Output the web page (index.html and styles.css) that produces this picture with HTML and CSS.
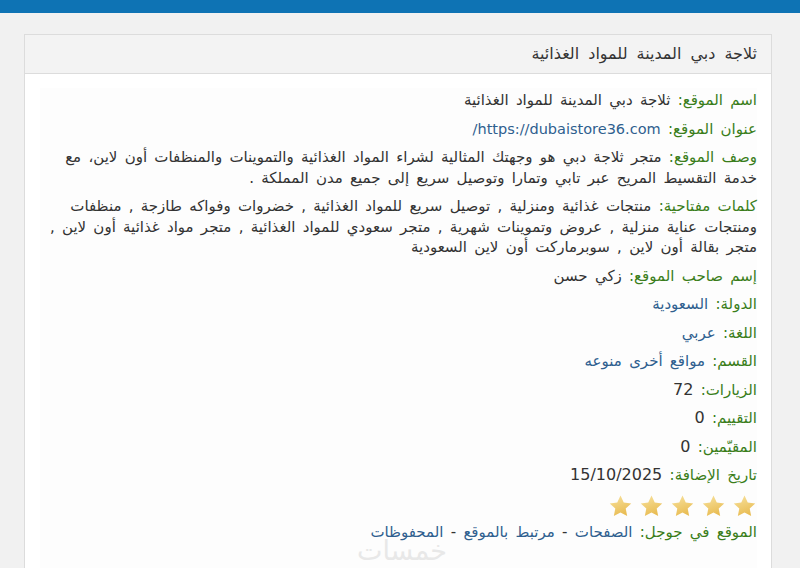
FILE: index.html
```html
<!DOCTYPE html>
<html lang="ar" dir="rtl">
<head>
    <meta charset="UTF-8">
    <title>ثلاجة دبي المدينة للمواد الغذائية</title>
    <link rel="stylesheet" href="styles.css">
</head>
<body>
    <svg class="defs" width="0" height="0">
        <linearGradient id="gold" x1="0" y1="0" x2="0.4" y2="1">
            <stop offset="0" stop-color="#f8e3a0"/>
            <stop offset="1" stop-color="#e9bd55"/>
        </linearGradient>
    </svg>

    <div class="topbar"></div>

    <div class="panel">
        <div class="panel-head">ثلاجة دبي المدينة للمواد الغذائية</div>
        <div class="panel-body">
            <div class="info">
                <p><span class="lbl">اسم الموقع:</span> ثلاجة دبي المدينة للمواد الغذائية</p>
                <p><span class="lbl">عنوان الموقع:</span> <a href="#" class="url">https://dubaistore36.com/</a></p>
                <p><span class="lbl">وصف الموقع:</span> متجر ثلاجة دبي هو وجهتك المثالية لشراء المواد الغذائية والتموينات والمنظفات أون لاين، مع خدمة التقسيط المريح عبر تابي وتمارا وتوصيل سريع إلى جميع مدن المملكة .</p>
                <p><span class="lbl">كلمات مفتاحية:</span> منتجات غذائية ومنزلية , توصيل سريع للمواد الغذائية , خضروات وفواكه طازجة , منظفات ومنتجات عناية منزلية , عروض وتموينات شهرية , متجر سعودي للمواد الغذائية , متجر مواد غذائية أون لاين , متجر بقالة أون لاين , سوبرماركت أون لاين السعودية</p>
                <p><span class="lbl">إسم صاحب الموقع:</span> زكي حسن</p>
                <p><span class="lbl">الدولة:</span> <a href="#">السعودية</a></p>
                <p><span class="lbl">اللغة:</span> <a href="#">عربي</a></p>
                <p><span class="lbl">القسم:</span> <a href="#">مواقع أخرى منوعه</a></p>
                <p><span class="lbl">الزيارات:</span> <span class="num">72</span></p>
                <p><span class="lbl">التقييم:</span> <span class="num">0</span></p>
                <p><span class="lbl">المقيّمين:</span> <span class="num">0</span></p>
                <p><span class="lbl">تاريخ الإضافة:</span> <span class="num">15/10/2025</span></p>
                <div class="stars">
                    <svg class="star" viewBox="0 0 24 24"><path d="M12 1.5l3.1 6.6 7.2.9-5.3 5 1.4 7.2L12 17.7l-6.4 3.5L7 14l-5.3-5 7.2-.9z"/></svg>
                    <svg class="star" viewBox="0 0 24 24"><path d="M12 1.5l3.1 6.6 7.2.9-5.3 5 1.4 7.2L12 17.7l-6.4 3.5L7 14l-5.3-5 7.2-.9z"/></svg>
                    <svg class="star" viewBox="0 0 24 24"><path d="M12 1.5l3.1 6.6 7.2.9-5.3 5 1.4 7.2L12 17.7l-6.4 3.5L7 14l-5.3-5 7.2-.9z"/></svg>
                    <svg class="star" viewBox="0 0 24 24"><path d="M12 1.5l3.1 6.6 7.2.9-5.3 5 1.4 7.2L12 17.7l-6.4 3.5L7 14l-5.3-5 7.2-.9z"/></svg>
                    <svg class="star" viewBox="0 0 24 24"><path d="M12 1.5l3.1 6.6 7.2.9-5.3 5 1.4 7.2L12 17.7l-6.4 3.5L7 14l-5.3-5 7.2-.9z"/></svg>
                </div>
                <p class="google"><span class="lbl">الموقع في جوجل:</span> <a href="#">الصفحات</a> - <a href="#">مرتبط بالموقع</a> - <a href="#">المحفوظات</a></p>
                <div class="watermark">خمسات</div>
            </div>
        </div>
    </div>
</body>
</html>
```

FILE: styles.css
```css
body {
    margin: 0;
    background: #f1f1f1;
    color: #333;
    font-family: Tahoma, "DejaVu Sans", sans-serif;
    font-size: 15px;
    word-spacing: 2.5px;
    overflow: hidden;
}

a {
    color: #2f5f8f;
    text-decoration: none;
}

.defs {
    position: absolute;
}

.url {
    font-size: 14.5px;
    word-spacing: 0;
}

.num {
    font-size: 16px;
}

.topbar {
    height: 13px;
    background: #0e73b4;
}

.panel {
    margin: 21px 28px 0 24px;
    background: #fff;
    border: 1px solid #dcdcdc;
}

.panel-head {
    height: 38px;
    line-height: 38px;
    padding: 0 14px;
    background: #f3f3f3;
    border-bottom: 1px solid #dcdcdc;
    font-size: 16px;
    word-spacing: 4px;
    color: #333;
}

.panel-body {
    padding: 14px 14px 0 15px;
}

.info {
    padding: 2px 0 0 4px;
    background: #fdfdfd;
    height: 480px;
}

.info p {
    margin: 0 0 8px;
    line-height: 20.5px;
}

.lbl {
    color: #3a7d1a;
}

.stars {
    display: flex;
    gap: 6px;
    margin: 2px 0 0;
    height: 26px;
}

.star {
    width: 25px;
    height: 25px;
    fill: url(#gold);
}

.info p.google {
    margin-top: 2px;
    margin-bottom: 0;
}

.watermark {
    margin: -3px 310px 0 0;
    font-size: 27px;
    color: #e8e8e8;
    line-height: 24px;
    word-spacing: 0;
}
```
